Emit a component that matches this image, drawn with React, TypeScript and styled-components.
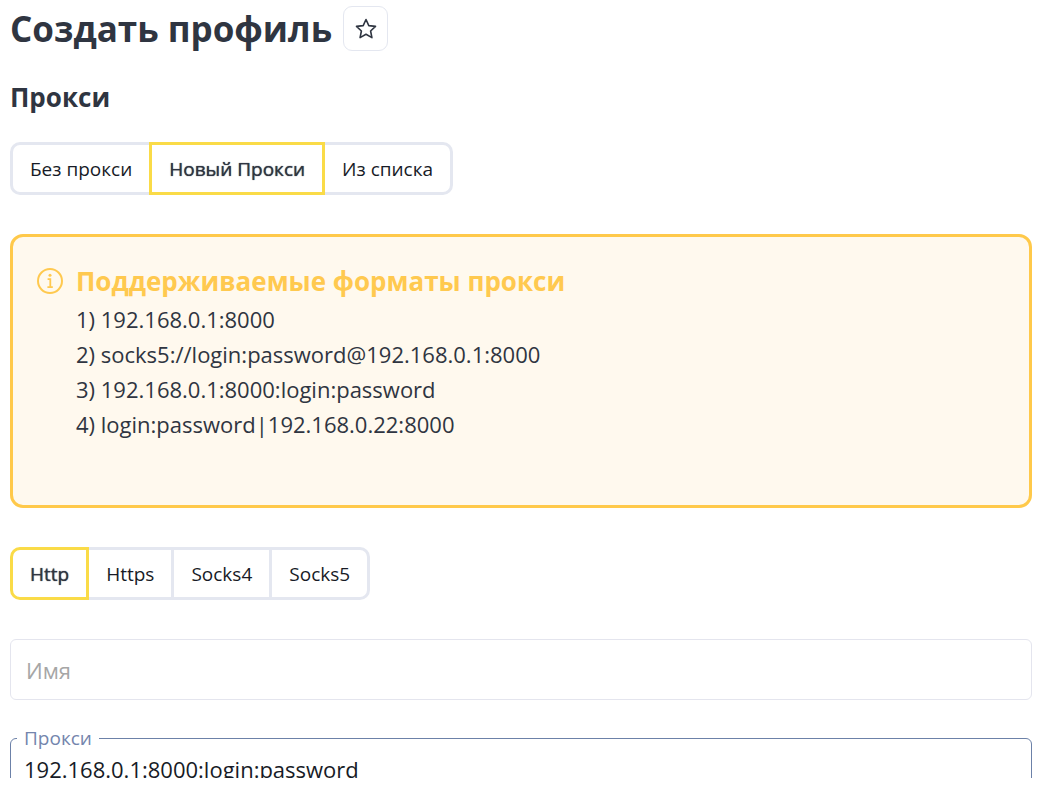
import React, { useState } from 'react';
import styled, { createGlobalStyle } from 'styled-components';

const GlobalStyle = createGlobalStyle`
  *, *::before, *::after { box-sizing: border-box; }
  body {
    margin: 0;
    background: #fff;
    color: #2f3541;
    font-family: 'Open Sans', 'Noto Sans', sans-serif;
  }
`;

const Page = styled.main`
  display: flex;
  flex-direction: column;
  height: calc(100vh - 22px);
  padding: 6px 9px 0 10px;
  overflow: hidden;
  & > * { flex-shrink: 0; }
`;

const TitleRow = styled.header`
  display: flex;
  align-items: center;
  gap: 11px;
`;

const Title = styled.h1`
  margin: 0;
  font-size: 35px;
  line-height: 45px;
  font-weight: 700;
`;

const StarButton = styled.button`
  display: flex;
  align-items: center;
  justify-content: center;
  width: 45px;
  height: 45px;
  padding: 0;
  border: 1px solid #e4e7f0;
  border-radius: 9px;
  background: #fff;
  color: #2f3541;
  cursor: pointer;
`;

const StarIcon = styled.svg`
  width: 24px;
  height: 24px;
`;

const SectionTitle = styled.h2`
  margin: 28px 0 27px;
  font-size: 26px;
  line-height: 36px;
  font-weight: 700;
`;

const Segments = styled.div`
  display: flex;
  align-self: flex-start;
`;

const HiddenRadio = styled.input`
  appearance: none;
  width: 0;
  height: 0;
  margin: 0;
`;

const Segment = styled.label<{ $active: boolean }>`
  display: flex;
  align-items: center;
  height: 53px;
  padding: 0 17px;
  border: 3px solid ${(p) => (p.$active ? '#fadb47' : '#e4e7f0')};
  color: ${(p) => (p.$active ? '#2f3541' : '#171b26')};
  font-size: 19px;
  text-shadow: ${(p) => (p.$active ? '0 0 1px currentColor' : 'none')};
  position: relative;
  z-index: ${(p) => (p.$active ? 1 : 0)};
  cursor: pointer;
  &:not(:first-child) { margin-left: -3px; }
  &:first-child { border-radius: 10px 0 0 10px; }
  &:last-child { border-radius: 0 10px 10px 0; }
`;

const Notice = styled.section`
  display: flex;
  align-items: flex-start;
  gap: 13px;
  margin: 39px 0;
  padding: 27px 24px 63px;
  border: 3px solid #ffc94a;
  border-radius: 13px;
  background: #fff9ee;
`;

const NoticeIcon = styled.svg`
  flex: none;
  width: 26px;
  height: 26px;
  margin-top: 4px;
`;

const NoticeTitle = styled.h3`
  margin: 0 0 4px;
  color: #ffc94f;
  font-size: 26px;
  line-height: 34px;
  font-weight: 700;
`;

const Formats = styled.div`
  font-size: 22px;
  line-height: 35px;
`;

const NameInput = styled.input`
  width: 100%;
  height: 61px;
  margin: 39px 0 25px;
  padding: 0 15px;
  border: 1px solid #e4e5ee;
  border-radius: 6px;
  color: #171b26;
  font: 22px 'Open Sans', 'Noto Sans', sans-serif;
  &::placeholder { color: #a6a6a6; opacity: 1; }
`;

const ProxyField = styled.fieldset`
  margin: 0;
  padding: 0 13px;
  border: 1px solid #6c81a8;
  border-radius: 6px;
`;

const ProxyLegend = styled.legend`
  margin-left: -7px;
  padding: 0 7px;
  color: #7485ad;
  font-size: 19px;
  line-height: 27px;
`;

const ProxyText = styled.textarea`
  display: block;
  width: 100%;
  height: 96px;
  padding: 0;
  border: 0;
  outline: 0;
  resize: none;
  background: transparent;
  color: #171b26;
  font: 22px/35px 'Open Sans', 'Noto Sans', sans-serif;
`;

type SegmentedProps = {
  name: string;
  label: string;
  options: string[];
  initial: string;
};

function Segmented({ name, label, options, initial }: SegmentedProps) {
  const [value, setValue] = useState(initial);
  return (
    <Segments role="radiogroup" aria-label={label}>
      {options.map((option) => (
        <Segment key={option} $active={option === value}>
          <HiddenRadio
            type="radio"
            name={name}
            value={option}
            checked={option === value}
            onChange={() => setValue(option)}
          />
          {option}
        </Segment>
      ))}
    </Segments>
  );
}

const formats = [
  '1) 192.168.0.1:8000',
  '2) socks5://login:password@192.168.0.1:8000',
  '3) 192.168.0.1:8000:login:password',
  '4) login:password|192.168.0.22:8000',
];

export default function App() {
  return (
    <>
      <GlobalStyle />
      <Page>
        <TitleRow>
          <Title>Создать профиль</Title>
          <StarButton type="button" aria-label="Избранное">
            <StarIcon viewBox="0 0 24 24" fill="none" stroke="currentColor" aria-hidden="true">
              <path
                d="M12 2.5l2.8 6.1 6.7.8-4.9 4.6 1.3 6.6-5.9-3.3-5.9 3.3 1.3-6.6-4.9-4.6 6.7-.8z"
                strokeWidth="1.6"
                strokeLinejoin="round"
              />
            </StarIcon>
          </StarButton>
        </TitleRow>
        <SectionTitle>Прокси</SectionTitle>
        <Segmented
          name="source"
          label="Прокси"
          options={['Без прокси', 'Новый Прокси', 'Из списка']}
          initial="Новый Прокси"
        />
        <Notice>
          <NoticeIcon viewBox="0 0 26 26" fill="none" stroke="#ffc94f" aria-hidden="true">
            <circle cx="13" cy="13" r="12" strokeWidth="2" />
            <circle cx="13" cy="7.3" r="1.5" fill="#ffc94f" stroke="none" />
            <path d="M10.6 11.1h2.7v7.6M10.4 19.2h5.4" strokeWidth="1.8" />
          </NoticeIcon>
          <div>
            <NoticeTitle>Поддерживаемые форматы прокси</NoticeTitle>
            <Formats>
              {formats.map((format) => (
                <div key={format}>{format}</div>
              ))}
            </Formats>
          </div>
        </Notice>
        <Segmented
          name="protocol"
          label="Протокол"
          options={['Http', 'Https', 'Socks4', 'Socks5']}
          initial="Http"
        />
        <NameInput type="text" placeholder="Имя" aria-label="Имя" />
        <ProxyField>
          <ProxyLegend>
            <label htmlFor="proxy">Прокси</label>
          </ProxyLegend>
          <ProxyText id="proxy" defaultValue="192.168.0.1:8000:login:password" spellCheck={false} />
        </ProxyField>
      </Page>
    </>
  );
}
